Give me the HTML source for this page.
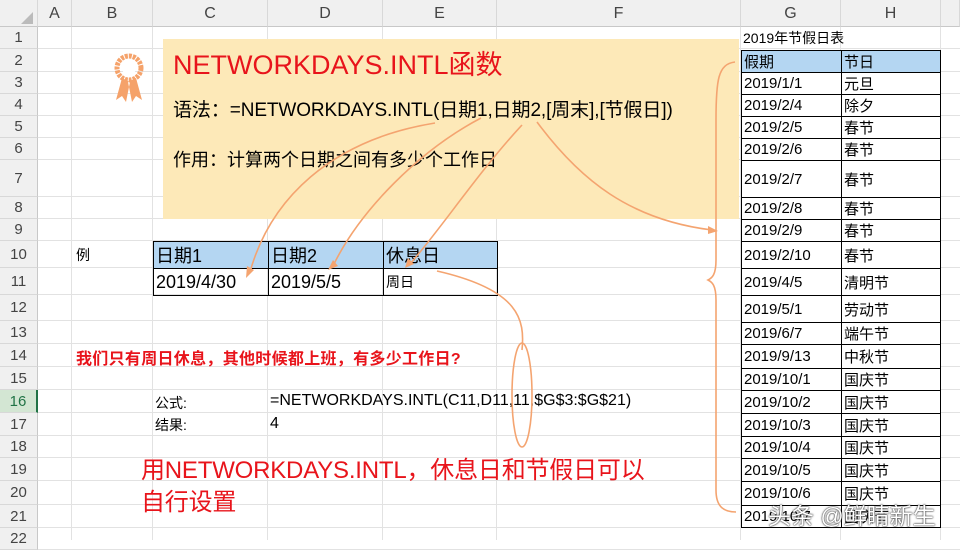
<!DOCTYPE html>
<html><head><meta charset="utf-8"><style>
*{margin:0;padding:0;box-sizing:border-box}
body{width:960px;height:540px;overflow:hidden;background:#fff;position:relative;font-family:"Liberation Sans","Noto Sans CJK SC",sans-serif;color:#000}
.a{position:absolute;white-space:nowrap}
.colh{position:absolute;top:0;height:27px;background:#f0f0f0;border-bottom:1px solid #c8c8c8;border-right:1px solid #d8d8d8;color:#444;font-size:16px;text-align:center;line-height:28px}
.rowh{position:absolute;left:0;width:38px;background:#f0f0f0;border-right:1px solid #c8c8c8;border-bottom:1px solid #d8d8d8;color:#444;font-size:15px;text-align:center}
.gl{position:absolute;background:#e2e2e2}
.c{position:absolute;border:1px solid #000;font-size:15px;padding-left:2px;display:flex;align-items:center}
</style></head><body>
<div class="colh" style="left:0;width:38px"></div>
<div class="colh" style="left:38px;width:34px">A</div>
<div class="colh" style="left:72px;width:81px">B</div>
<div class="colh" style="left:153px;width:115px">C</div>
<div class="colh" style="left:268px;width:115px">D</div>
<div class="colh" style="left:383px;width:114px">E</div>
<div class="colh" style="left:497px;width:244px">F</div>
<div class="colh" style="left:741px;width:100px">G</div>
<div class="colh" style="left:841px;width:100px">H</div>
<div class="colh" style="left:941px;width:19px"></div>
<svg class="a" style="left:20px;top:11px" width="14" height="14"><path d="M13 1V13H1Z" fill="#bbb"/></svg>

<div id="rows"></div>
<script>
var b=[27,49,72,94,116,138,160,197,219,241,268,295,321,344,367,390,413,436,458,481,505,528,550];
var h='';
for(var i=0;i<b.length-1;i++){
 var t=b[i],hh=b[i+1]-b[i],n=i+1;
 var st=n==16?'background:#d3e6d3;color:#217346;border-right:2px solid #217346;':'';
 h+='<div class="rowh" style="top:'+t+'px;height:'+hh+'px;line-height:'+hh+'px;'+st+'">'+n+'</div>';
 h+='<div class="gl" style="left:38px;width:922px;top:'+(b[i+1]-1)+'px;height:1px"></div>';
}
[72,153,268,383,497,741,841,941].forEach(function(x){h+='<div class="gl" style="top:27px;height:513px;left:'+(x-1)+'px;width:1px"></div>'});
document.getElementById('rows').innerHTML=h;
</script>

<div class="a" style="left:163px;top:39px;width:576px;height:180px;background:#fde9b8"></div>
<svg class="a" style="left:110px;top:48px" width="40" height="60" viewBox="0 0 40 60">
<path d="M12 30L6 52L12 48L16 54L20 34Z M26 30L32 52L26 48L22 54L18 34Z" fill="#f5a26a"/>
<circle cx="19" cy="20" r="12" fill="none" stroke="#f5a26a" stroke-width="5" stroke-dasharray="3 1"/>
<circle cx="19" cy="20" r="7" fill="#fff"/>
</svg>
<div class="a" style="left:173px;top:43px;font-size:27px;color:#e8141b">NETWORKDAYS.INTL函数</div>
<div class="a" style="left:173px;top:95px;font-size:19px;letter-spacing:-0.1px">语法：=NETWORKDAYS.INTL(日期1,日期2,[周末],[节假日])</div>
<div class="a" style="left:173px;top:146px;font-size:18px">作用：计算两个日期之间有多少个工作日</div>

<div class="a" style="left:76px;top:245px;font-size:14px">例</div>
<div class="c" style="left:153px;top:241px;width:116px;height:28px;background:#b4d6f2;font-size:18px">日期1</div>
<div class="c" style="left:268px;top:241px;width:116px;height:28px;background:#b4d6f2;font-size:18px">日期2</div>
<div class="c" style="left:383px;top:241px;width:115px;height:28px;background:#b4d6f2;font-size:18px">休息日</div>
<div class="c" style="left:153px;top:268px;width:116px;height:28px;font-size:18px">2019/4/30</div>
<div class="c" style="left:268px;top:268px;width:116px;height:28px;font-size:18px">2019/5/5</div>
<div class="c" style="left:383px;top:268px;width:115px;height:28px;font-size:14px">周日</div>

<div class="a" style="left:76px;top:345px;font-size:16px;font-weight:bold;color:#e8141b;letter-spacing:0.3px">我们只有周日休息，其他时候都上班，有多少工作日?</div>
<div class="a" style="left:155px;top:393px;font-size:14px">公式:</div>
<div class="a" style="left:270px;top:392px;font-size:16px">=NETWORKDAYS.INTL(C11,D11,11,$G$3:$G$21)</div>
<div class="a" style="left:155px;top:415px;font-size:14px">结果:</div>
<div class="a" style="left:270px;top:415px;font-size:16px">4</div>
<div class="a" style="left:141px;top:455px;font-size:24px;color:#e8141b;line-height:32px;letter-spacing:-0.2px">用NETWORKDAYS.INTL，休息日和节假日可以<br>自行设置</div>

<div class="a" style="left:743px;top:28px;font-size:14px">2019年节假日表</div>
<div id="gt"></div>
<script>
var rb=[50,72,94,116,138,160,197,219,241,268,295,322,344,368,390,413,436,458,481,505,527];
var d=[["假期","节日"],["2019/1/1","元旦"],["2019/2/4","除夕"],["2019/2/5","春节"],["2019/2/6","春节"],["2019/2/7","春节"],["2019/2/8","春节"],["2019/2/9","春节"],["2019/2/10","春节"],["2019/4/5","清明节"],["2019/5/1","劳动节"],["2019/6/7","端午节"],["2019/9/13","中秋节"],["2019/10/1","国庆节"],["2019/10/2","国庆节"],["2019/10/3","国庆节"],["2019/10/4","国庆节"],["2019/10/5","国庆节"],["2019/10/6","国庆节"],["2019/10/7","国庆节"]];
var g='';
for(var i=0;i<d.length;i++){var t=rb[i],hh=rb[i+1]-t+1,bg=i==0?'background:#b4d6f2;':'background:#fff;';
g+='<div class="c" style="left:741px;top:'+t+'px;width:101px;height:'+hh+'px;'+bg+'">'+d[i][0]+'</div>';
g+='<div class="c" style="left:841px;top:'+t+'px;width:100px;height:'+hh+'px;'+bg+'">'+d[i][1]+'</div>';}
document.getElementById('gt').innerHTML=g;
</script>

<svg class="a" style="left:0;top:0" width="960" height="540">
<g fill="none" stroke="#f4a470" stroke-width="1.6">
<path d="M435 123C330 140 270 200 250 272"/>
<path d="M481 118C420 150 360 210 333 266"/>
<path d="M522 125C480 170 440 230 410 264"/>
<path d="M537 122C580 180 630 220 712 230"/>
<path d="M437 271C520 290 525 320 522 350"/>
<ellipse cx="522" cy="395" rx="10" ry="52"/>
<path d="M735 62C718 64 716 80 716 120L716 260C716 275 712 278 708 280C712 282 716 285 716 300L716 490C716 505 722 512 736 512"/>
</g>
<g fill="#f4a470">
<path d="M246 278L247 266L254 270Z"/>
<path d="M328 270L333 260L338 266Z"/>
<path d="M405 268L408 258L414 264Z"/>
<path d="M718 231L708 226L708 234Z"/>
</g>
</svg>
<div class="a" style="left:768px;top:497px;font-size:23px;color:#fff;text-shadow:0 0 2px #333,0 0 1px #000">头条 @鲜睛新生</div>
</body></html>
